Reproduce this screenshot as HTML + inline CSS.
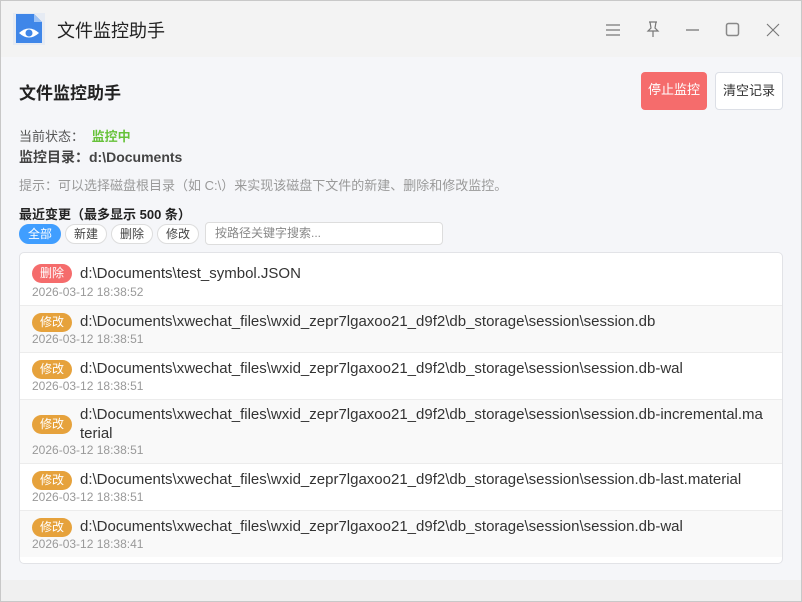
<!DOCTYPE html>
<html><head><meta charset="utf-8"><style>
*{box-sizing:border-box;margin:0;padding:0}
body{width:802px;height:602px;overflow:hidden;font-family:"Liberation Sans","Noto Sans CJK SC",sans-serif;background:#fff}
.win{position:absolute;left:0;top:0;width:802px;height:602px;border:1px solid #c8c8c8;background:#f5f6f9}
.tb{position:absolute;left:0;top:0;width:800px;height:56px;background:#f3f3f3}
.logo{position:absolute;left:12px;top:12px;width:32px;height:32px;background:#e6ebf3}
.ttl{position:absolute;left:56px;top:16px;font-size:18px;color:#222}
.ic{position:absolute;top:19px}
.bottom{position:absolute;left:0;top:579px;width:800px;height:21px;background:#f0f0f0}
.h1{position:absolute;left:18px;top:78px;font-size:17px;font-weight:bold;color:#222}
.btn{position:absolute;top:71px;height:38px;border-radius:4px;font-size:13px;line-height:36px;text-align:center}
.t{position:absolute;left:18px;font-size:13px;color:#555}
.chip{position:absolute;top:223px;height:20px;border-radius:10px;border:1px solid #ddd;background:#fff;font-size:12px;line-height:18px;text-align:center;color:#444}
.card{position:absolute;left:18px;top:251px;width:764px;height:312px;background:#fff;border:1px solid #e2e3e7;border-radius:5px;overflow:hidden}
.row{position:absolute;left:0;width:762px;border-top:1px solid #ececec}
.g{background:#f9f9f9}
.tag{position:absolute;left:12px;width:40px;height:19px;border-radius:10px;color:#fff;font-size:12px;line-height:19px;text-align:center}
.p{position:absolute;left:60px;font-size:15px;color:#333;line-height:19px;white-space:nowrap}
.d{position:absolute;left:12px;font-size:12px;color:#999}
</style></head><body><div class="win">
<div class="tb">
<div class="logo"><svg width="32" height="32"><path d="M3 1h18l8 8v21H3z" fill="#3f86e8"/><path d="M21 1v8h8z" fill="#9cc2f5"/><path d="M6 20q10-9 20 0q-10 9-20 0z" fill="#fff"/><circle cx="16" cy="20" r="3.5" fill="#3f86e8"/></svg></div>
<div class="ttl">文件监控助手</div>
<svg class="ic" style="left:604px" width="16" height="18"><path d="M1 5h14M1 10h14M1 15h14" stroke="#777" stroke-width="1.2"/></svg>
<svg class="ic" style="left:644px" width="16" height="20"><path d="M4 2h8M5 2l1 6-3 3h10l-3-3 1-6M8 11v6" stroke="#777" stroke-width="1.2" fill="none"/></svg>
<svg class="ic" style="left:684px" width="16" height="18"><path d="M1 10h13" stroke="#888" stroke-width="1.5"/></svg>
<svg class="ic" style="left:724px" width="16" height="18"><rect x="1.5" y="3.5" width="12" height="12" rx="2" stroke="#888" stroke-width="1.5" fill="none"/></svg>
<svg class="ic" style="left:764px" width="16" height="18"><path d="M2 4l12 12M14 4L2 16" stroke="#777" stroke-width="1.1"/></svg>
</div>
<div class="h1">文件监控助手</div>
<div class="btn" style="left:640px;width:66px;background:#f56c6c;color:#fff">停止监控</div>
<div class="btn" style="left:714px;width:68px;background:#fff;border:1px solid #dcdfe6;color:#333">清空记录</div>
<div class="t" style="top:125px">当前状态： <b style="color:#67c23a;margin-left:4px">监控中</b></div>
<div class="t" style="top:146px;font-weight:bold;font-size:14px;color:#444">监控目录：d:\Documents</div>
<div class="t" style="top:174px;color:#999">提示：可以选择磁盘根目录（如 C:\）来实现该磁盘下文件的新建、删除和修改监控。</div>
<div class="t" style="top:203px;font-weight:bold;color:#222">最近变更（最多显示 500 条）</div>
<div class="chip" style="left:18px;width:42px;background:#409eff;border-color:#409eff;color:#fff">全部</div>
<div class="chip" style="left:64px;width:42px">新建</div>
<div class="chip" style="left:110px;width:42px">删除</div>
<div class="chip" style="left:156px;width:42px">修改</div>
<div class="chip" style="left:204px;width:238px;height:23px;top:221px;border-radius:4px;text-align:left;padding-left:9px;line-height:21px;color:#888">按路径关键字搜索...</div>
<div class="card">
<div class="row" style="top:0;height:53px;border-top:none"><div class="tag" style="top:11px;background:#f56c6c">删除</div><div class="p" style="top:11px">d:\Documents\test_symbol.JSON</div><div class="d" style="top:32px">2026-03-12 18:38:52</div></div>
<div class="row g" style="top:52px;height:47px"><div class="tag" style="top:7px;background:#e6a23c">修改</div><div class="p" style="top:6px">d:\Documents\xwechat_files\wxid_zepr7lgaxoo21_d9f2\db_storage\session\session.db</div><div class="d" style="top:26px">2026-03-12 18:38:51</div></div>
<div class="row" style="top:99px;height:47px"><div class="tag" style="top:7px;background:#e6a23c">修改</div><div class="p" style="top:6px">d:\Documents\xwechat_files\wxid_zepr7lgaxoo21_d9f2\db_storage\session\session.db-wal</div><div class="d" style="top:26px">2026-03-12 18:38:51</div></div>
<div class="row g" style="top:146px;height:64px"><div class="tag" style="top:15px;background:#e6a23c">修改</div><div class="p" style="top:5px">d:\Documents\xwechat_files\wxid_zepr7lgaxoo21_d9f2\db_storage\session\session.db-incremental.ma<br>terial</div><div class="d" style="top:43px">2026-03-12 18:38:51</div></div>
<div class="row" style="top:210px;height:47px"><div class="tag" style="top:7px;background:#e6a23c">修改</div><div class="p" style="top:6px">d:\Documents\xwechat_files\wxid_zepr7lgaxoo21_d9f2\db_storage\session\session.db-last.material</div><div class="d" style="top:26px">2026-03-12 18:38:51</div></div>
<div class="row g" style="top:257px;height:47px"><div class="tag" style="top:7px;background:#e6a23c">修改</div><div class="p" style="top:6px">d:\Documents\xwechat_files\wxid_zepr7lgaxoo21_d9f2\db_storage\session\session.db-wal</div><div class="d" style="top:26px">2026-03-12 18:38:41</div></div>
</div>
<div class="bottom"></div>
</div></body></html>
